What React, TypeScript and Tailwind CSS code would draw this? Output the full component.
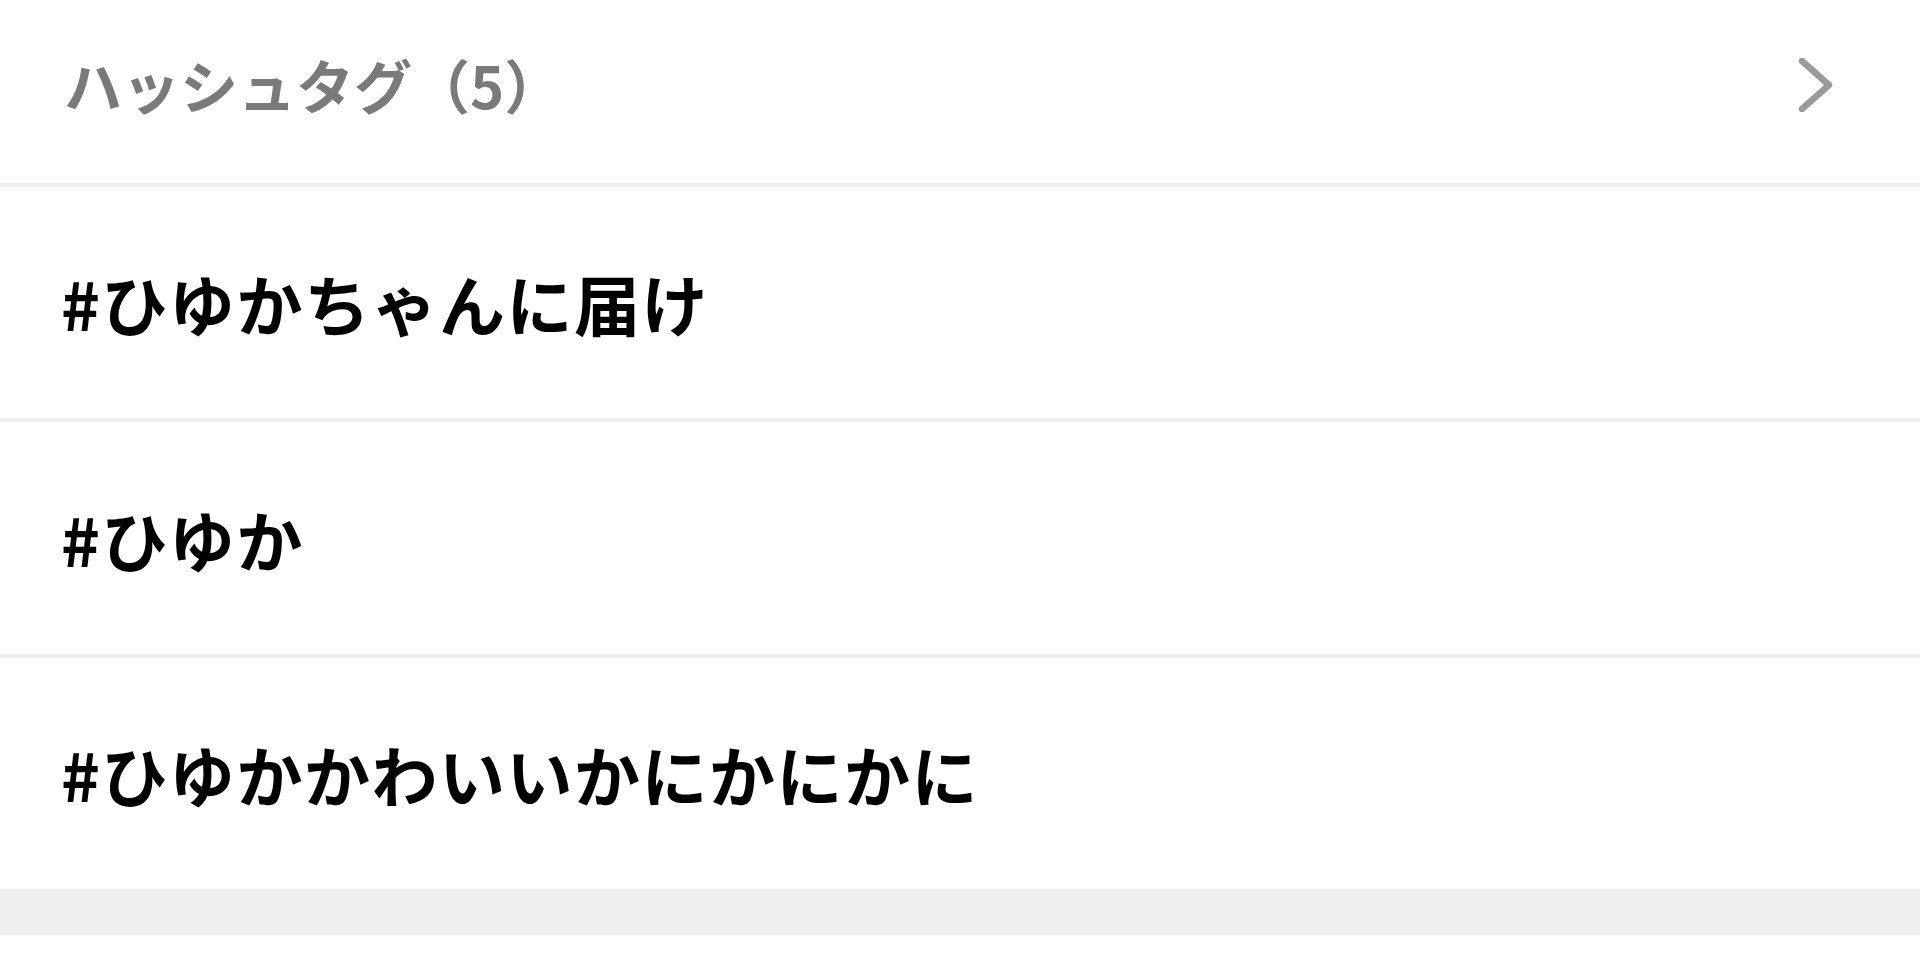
import React from "react";

const jp = { fontFamily: '"Noto Sans CJK JP", sans-serif' };

export default function App() {
  return (
    <div className="w-[1920px] h-[973px] bg-white">
      <div className="h-[183px] flex items-center justify-between pl-[64px] pr-[86px] pb-[14px]">
        <div className="text-[58px] font-semibold text-[#7a7a7a]" style={jp}>
          ハッシュタグ（5）
        </div>
        <svg width="36" height="54" viewBox="0 0 36 54" fill="none">
          <path d="M4 3 L31 27 L4 51" stroke="#9a9a9a" strokeWidth="6.5" strokeLinecap="round" strokeLinejoin="round" />
        </svg>
      </div>
      <div className="h-[4px] bg-[#eeeeee]" />
      <div className="h-[231px] flex items-center pl-[61px]">
        <div className="text-[66px] tracking-[1.5px] font-bold text-black" style={jp}>
          #ひゆかちゃんに届け
        </div>
      </div>
      <div className="h-[4px] bg-[#eeeeee]" />
      <div className="h-[232px] flex items-center pl-[61px]">
        <div className="text-[66px] tracking-[1.5px] font-bold text-black" style={jp}>
          #ひゆか
        </div>
      </div>
      <div className="h-[4px] bg-[#eeeeee]" />
      <div className="h-[231px] flex items-center pl-[61px]">
        <div className="text-[66px] tracking-[1.5px] font-bold text-black" style={jp}>
          #ひゆかかわいいかにかにかに
        </div>
      </div>
      <div className="h-[46px] bg-[#efefef]" />
    </div>
  );
}
